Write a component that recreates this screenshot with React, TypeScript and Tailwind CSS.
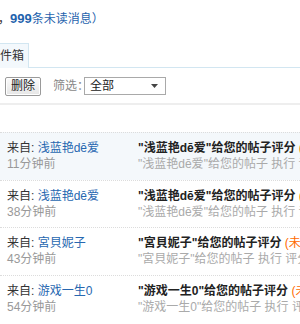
import React from 'react';

const rows = [
  { from: '浅蓝艳dē爱', time: '11分钟前', active: true },
  { from: '浅蓝艳dē爱', time: '38分钟前' },
  { from: '宮貝妮子', time: '43分钟前' },
  { from: '游戏一生0', time: '54分钟前' },
];

const font = "font-['Liberation_Sans','Noto_Sans_CJK_SC',sans-serif]";

const App = () => {
  return (
    <div className={`w-[300px] h-[324px] overflow-hidden bg-white text-[12px] text-[#333] ${font}`}>
      {/* unread summary */}
      <div className="h-[43px] pt-[11px] leading-[16px] whitespace-nowrap -ml-[2px]">
        <span className="text-[#333]">，</span>
        <span className="text-[#1f63ad] font-bold text-[13px]">999</span>
        <span className="text-[#1f63ad] text-[12px]">条未读消息</span>
        <span className="text-[#1f63ad]">）</span>
      </div>

      {/* tabs */}
      <div className="flex h-[25px] border-b border-[#d2e6f1]">
        <div className="w-[29px] -mb-px bg-[#f3f8fc] border-t border-r border-[#d2e6f1] flex items-center justify-end pr-[4px] whitespace-nowrap overflow-hidden text-[12px] text-[#333]">
          收件箱
        </div>
      </div>

      {/* toolbar */}
      <div className="flex items-center h-[35px] pl-[5px] pt-[1px]">
        <button className="w-[36px] h-[19px] border border-[#9a9a9a] rounded-[2px] bg-gradient-to-b from-[#fbfbfb] to-[#e6e6e6] text-[12px] leading-[17px] text-[#222] shadow-[inset_0_0_0_1px_#fff]">
          删除
        </button>
        <span className="ml-[12px] text-[#888]">筛选：</span>
        <div className="-ml-[5px] w-[82px] h-[18px] border border-[#a9a9a9] flex items-center justify-between pl-[5px] pr-[7px] bg-white">
          <span className="text-[#222]">全部</span>
          <svg width="7" height="4" viewBox="0 0 7 4">
            <path d="M0 0h7L3.5 4z" fill="#444" />
          </svg>
        </div>
      </div>
      <div className="h-[2px] bg-[#eeeeee]" />

      {/* list */}
      <div className="mt-[27px]">
        {rows.map((r, i) => (
          <div
            key={i}
            className={`flex h-[47.5px] border-t border-dotted border-[#dcdcdc] pt-[7px] leading-[16px] whitespace-nowrap ${r.active ? 'bg-[#f4f8fb]' : ''}`}
          >
            <div className="w-[138px] shrink-0 pl-[7px]">
              <div>
                <span className="text-[#333]">来自: </span>
                <a className="text-[#2767b0]">{r.from}</a>
              </div>
              <div className="text-[#999]">{r.time}</div>
            </div>
            <div>
              <div className="font-bold text-[#222]">
                "{r.from}"给您的帖子评分 <span className="text-[#ff6a00] font-normal">(未读)</span>
              </div>
              <div className="text-[#aaa]">"{r.from}"给您的帖子 执行 评分 操作</div>
            </div>
          </div>
        ))}
      </div>
    </div>
  );
};

export default App;
